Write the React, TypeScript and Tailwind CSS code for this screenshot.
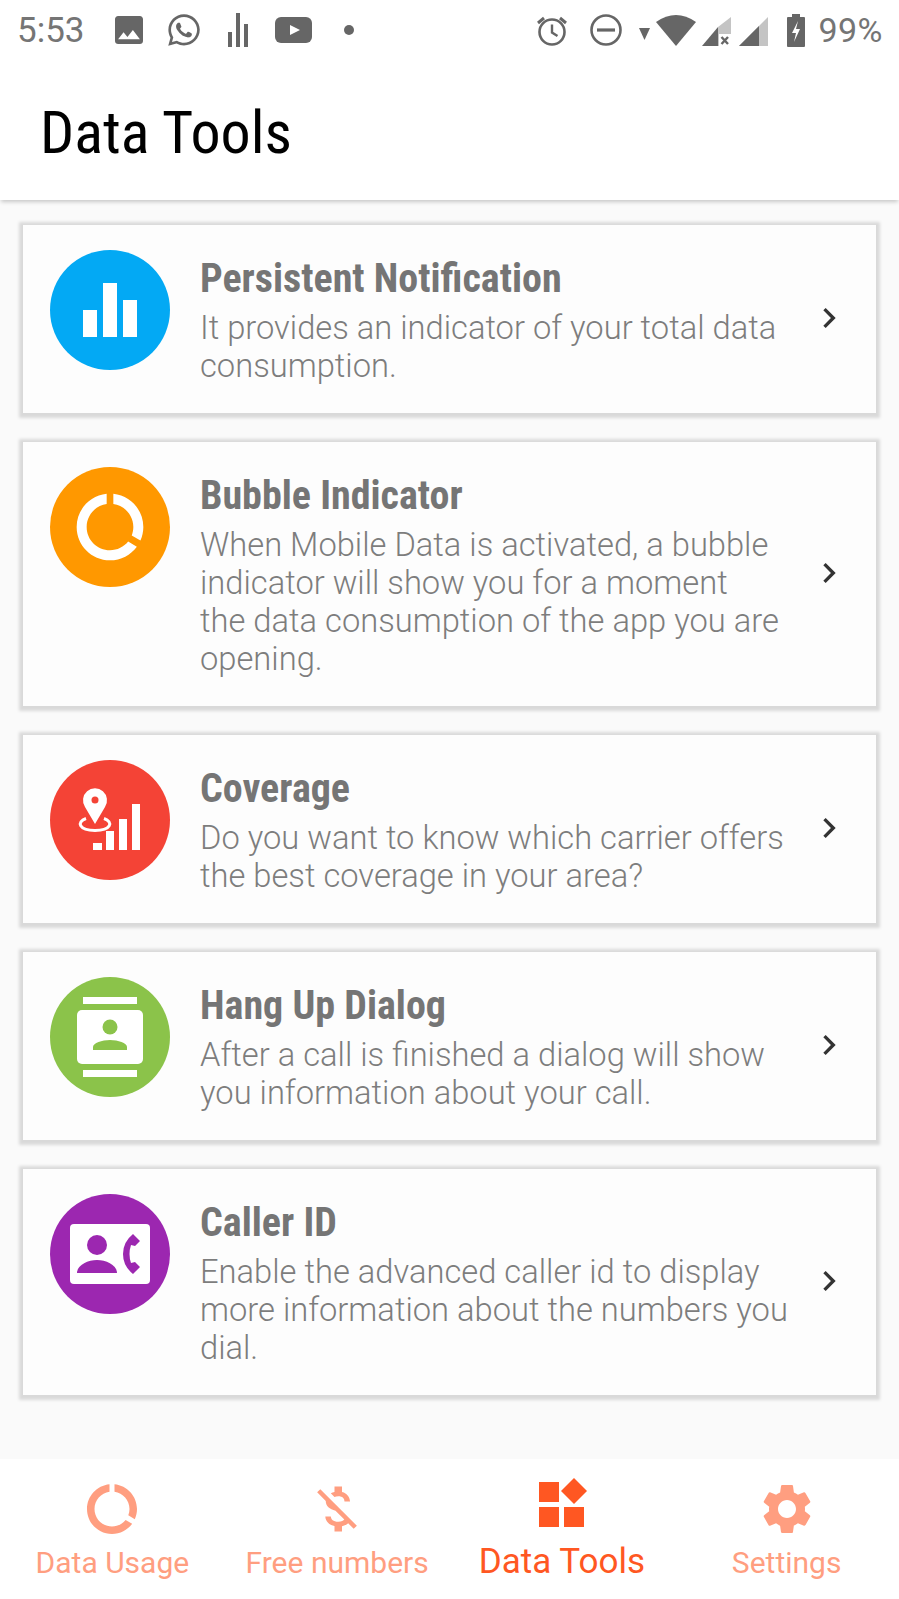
import React from 'react'
import { FaWhatsapp } from 'react-icons/fa'
import { MdChevronRight } from 'react-icons/md'

const DATA_USAGE = 'M13 2.05v3.03c3.39.49 6 3.39 6 6.92 0 .9-.18 1.75-.48 2.54l2.6 1.53c.56-1.24.88-2.62.88-4.07 0-5.18-3.95-9.45-9-9.95zM12 19c-3.87 0-7-3.13-7-7 0-3.53 2.61-6.43 6-6.92V2.05c-5.06.5-9 4.76-9 9.95 0 5.52 4.47 10 9.99 10 3.31 0 6.24-1.61 8.06-4.09l-2.6-1.53C16.17 17.98 14.21 19 12 19z'
const MONEY_OFF = 'M12.5 6.9c1.78 0 2.44.85 2.5 2.1h2.21c-.07-1.72-1.12-3.3-3.21-3.81V3h-3v2.16c-.53.12-1.03.3-1.48.54l1.47 1.47c.41-.17.91-.27 1.51-.27zM5.33 4.06L4.06 5.33 7.5 8.77c0 2.08 1.56 3.21 3.91 3.91l3.51 3.51c-.34.48-1.05.91-2.42.91-2.06 0-2.87-.92-2.98-2.1h-2.2c.12 2.19 1.76 3.42 3.68 3.83V21h3v-2.15c.96-.18 1.83-.55 2.46-1.12l2.22 2.22 1.27-1.27L5.33 4.06z'
const SETTINGS = 'M19.14 12.94c.04-.3.06-.61.06-.94 0-.32-.02-.64-.07-.94l2.03-1.58c.18-.14.23-.41.12-.61l-1.92-3.32c-.12-.22-.37-.29-.59-.22l-2.39.96c-.5-.38-1.03-.7-1.62-.94l-.36-2.54c-.04-.24-.24-.41-.48-.41h-3.84c-.24 0-.43.17-.47.41l-.36 2.54c-.59.24-1.13.57-1.62.94l-2.39-.96c-.22-.08-.47 0-.59.22L2.74 8.87c-.12.21-.08.47.12.61l2.03 1.58c-.05.3-.09.63-.09.94s.02.64.07.94l-2.03 1.58c-.18.14-.23.41-.12.61l1.92 3.32c.12.22.37.29.59.22l2.39-.96c.5.38 1.03.7 1.62.94l.36 2.54c.05.24.24.41.48.41h3.84c.24 0 .44-.17.47-.41l.36-2.54c.59-.24 1.13-.56 1.62-.94l2.39.96c.22.08.47 0 .59-.22l1.92-3.32c.12-.22.07-.47-.12-.61l-2.01-1.58zM12 15.6c-1.98 0-3.6-1.62-3.6-3.6s1.62-3.6 3.6-3.6 3.6 1.62 3.6 3.6-1.62 3.6-3.6 3.6z'

const StatusBar = () => (
  <div className="h-[60px] flex items-center justify-between bg-white text-[#666666] pl-[17px] pr-[16px]">
    <div className="flex items-center">
      <span className="text-[35px] leading-none text-[#757575] font-['Roboto',sans-serif]">5:53</span>
      <svg className="ml-[30px]" width="28" height="28" viewBox="3 3 18 18" fill="currentColor">
        <path d="M21 19V5c0-1.1-.9-2-2-2H5c-1.1 0-2 .9-2 2v14c0 1.1.9 2 2 2h14c1.1 0 2-.9 2-2zM8.5 13.5l2.5 3.01L14.5 12l4.5 6H5l3.5-4.5z" />
      </svg>
      <FaWhatsapp className="ml-[23px]" size={36} />
      <svg className="ml-[26px]" width="20" height="34" viewBox="0 0 20 34" fill="currentColor">
        <rect x="0" y="19" width="4" height="15" />
        <rect x="8" y="0" width="4" height="34" />
        <rect x="16" y="11" width="4" height="23" />
      </svg>
      <svg className="ml-[27px]" width="37" height="26" viewBox="0 0 37 26">
        <rect width="37" height="26" rx="6" fill="currentColor" />
        <path d="M15 8 L25 13 L15 18 Z" fill="#ffffff" />
      </svg>
      <div className="ml-[32px] w-[10px] h-[10px] rounded-full bg-[#666666]" />
    </div>
    <div className="flex items-center">
      <svg width="32" height="32" viewBox="0 0 32 32" fill="none" stroke="currentColor">
        <circle cx="16" cy="18" r="12.5" strokeWidth="2.6" />
        <path d="M16 10.5 V18.5 L21.5 22" strokeWidth="2.4" />
        <path d="M2 9 L8 4 M30 9 L24 4" strokeWidth="3" />
      </svg>
      <svg className="ml-[22px]" width="32" height="32" viewBox="0 0 32 32" fill="none" stroke="currentColor">
        <circle cx="16" cy="16" r="14.5" strokeWidth="2.6" />
        <path d="M7 16 H25" strokeWidth="3.2" />
      </svg>
      <svg className="ml-[17px] mt-[8px]" width="11" height="12" viewBox="0 0 11 12" fill="currentColor">
        <path d="M0 0 H11 L5.5 12 Z" />
      </svg>
      <svg className="ml-[6px]" width="40" height="32" viewBox="0 0 40 32" fill="currentColor">
        <path d="M0 8 Q20 -6 40 8 L20 32 Z" />
      </svg>
      <svg className="ml-[6px] mt-[2px]" width="29" height="29" viewBox="0 0 29 29" fill="currentColor">
        <path d="M29 0 V29 H16 V10 Z" fill="#c4c4c4" />
        <path d="M16 10 V29 H0 Z" />
        <rect x="17" y="17" width="12" height="12" fill="#ffffff" />
        <path d="M19.5 20 L26 27 M26 20 L19.5 27" stroke="#666666" strokeWidth="2.4" fill="none" />
      </svg>
      <svg className="ml-[8px] mt-[2px]" width="29" height="29" viewBox="0 0 29 29" fill="currentColor">
        <path d="M29 0 V29 H0 Z" fill="#c4c4c4" />
        <path d="M20 9 V29 H0 Z" />
      </svg>
      <svg className="ml-[19px]" width="18" height="33" viewBox="0 0 18 33">
        <path d="M5 0 H13 V3 H17 Q18 3 18 4 V32 Q18 33 17 33 H1 Q0 33 0 32 V4 Q0 3 1 3 H5 Z" fill="currentColor" />
        <path d="M11 7 L5 19 H9 L7 28 L13 15 H9 Z" fill="#ffffff" />
      </svg>
      <span className="ml-[13px] text-[34px] leading-none tracking-[0.5px] text-[#757575] font-['Roboto',sans-serif]">99%</span>
    </div>
  </div>
)

const BarsIcon = () => (
  <svg width="120" height="120" viewBox="0 0 120 120" fill="#ffffff">
    <rect x="33" y="60" width="14" height="27" />
    <rect x="53" y="33" width="14" height="54" />
    <rect x="73" y="50" width="14" height="37" />
  </svg>
)

const RingIcon = () => (
  <svg width="120" height="120" viewBox="-6 -6 36 36" fill="#ffffff">
    <path d={DATA_USAGE} />
  </svg>
)

const CoverageIcon = () => (
  <svg width="120" height="120" viewBox="0 0 120 120" fill="#ffffff">
    <path d="M45 64 L35 47 A12 12 0 1 1 55 47 Z" />
    <circle cx="45" cy="40" r="3.5" fill="#f44336" />
    <path d="M36 58.5 C26 62 29 70.5 45 70.5 C61 70.5 64 62 54 58.5" fill="none" stroke="#ffffff" strokeWidth="3" />
    <rect x="43" y="83" width="9" height="7" />
    <rect x="56" y="71" width="8" height="19" />
    <rect x="69" y="59" width="8" height="31" />
    <rect x="82" y="44" width="8" height="46" />
  </svg>
)

const DialogIcon = () => (
  <svg width="120" height="120" viewBox="0 0 120 120" fill="#ffffff">
    <rect x="33" y="20" width="54" height="7" />
    <rect x="33" y="93" width="54" height="7" />
    <rect x="27" y="33" width="66" height="54" rx="5" />
    <circle cx="60" cy="50" r="7.5" fill="#8bc34a" />
    <path d="M43 73 V70 C43 66 52 63 60 63 C68 63 77 66 77 70 V73 Z" fill="#8bc34a" />
  </svg>
)

const CallerIcon = () => (
  <svg width="120" height="120" viewBox="0 0 120 120" fill="#ffffff">
    <rect x="20" y="30" width="80" height="60" rx="4" />
    <circle cx="47" cy="51" r="10" fill="#9c27b0" />
    <path d="M27 79 C27 71 38 66 47 66 C56 66 67 71 67 79 Z" fill="#9c27b0" />
    <path d="M83 40 L90 47 L85 52 L81 51 Q78 60 81 69 L85 68 L90 73 L83 80 Q73 72 73 60 Q73 48 83 40 Z" fill="#9c27b0" />
  </svg>
)

type Tool = {
  title: string
  desc: string
  color: string
  icon: React.ReactNode
}

const tools: Tool[] = [
  {
    title: 'Persistent Notification',
    desc: 'It provides an indicator of your total data\nconsumption.',
    color: 'bg-[#03a9f4]',
    icon: <BarsIcon />,
  },
  {
    title: 'Bubble Indicator',
    desc: 'When Mobile Data is activated, a bubble\nindicator will show you for a moment\nthe data consumption of the app you are\nopening.',
    color: 'bg-[#ff9800]',
    icon: <RingIcon />,
  },
  {
    title: 'Coverage',
    desc: 'Do you want to know which carrier offers\nthe best coverage in your area?',
    color: 'bg-[#f44336]',
    icon: <CoverageIcon />,
  },
  {
    title: 'Hang Up Dialog',
    desc: 'After a call is finished a dialog will show\nyou information about your call.',
    color: 'bg-[#8bc34a]',
    icon: <DialogIcon />,
  },
  {
    title: 'Caller ID',
    desc: 'Enable the advanced caller id to display\nmore information about the numbers you\ndial.',
    color: 'bg-[#9c27b0]',
    icon: <CallerIcon />,
  },
]

const ToolCard = ({ tool }: { tool: Tool }) => (
  <div className="flex items-start bg-[#fdfdfd] pl-[27px] pt-[25px] pb-[28px] pr-[27px] shadow-[0_1px_3px_4px_rgba(0,0,0,0.13)]">
    <div className={`w-[120px] h-[120px] rounded-full shrink-0 ${tool.color}`}>{tool.icon}</div>
    <div className="ml-[30px] pt-[5px] flex-1 self-stretch">
      <div className="text-[40px] leading-[48px] font-bold text-[#757575] [font-stretch:75%] font-['Roboto',sans-serif]">{tool.title}</div>
      <div className="mt-[6px] text-[32.7px] leading-[38px] font-light text-[#7d7d7d] whitespace-pre-line font-['Roboto',sans-serif]">{tool.desc}</div>
    </div>
    <MdChevronRight className="self-center text-[#333333]" size={40} />
  </div>
)

const NavItem = ({ label, active, children }: { label: string; active?: boolean; children: React.ReactNode }) => (
  <div className={`flex flex-col items-center ${active ? 'text-[#ff5722]' : 'text-[#ff9e80]'}`}>
    <div className="h-[80px] flex items-end">{children}</div>
    <span className={`leading-[40px] font-['Roboto',sans-serif] ${active ? 'mt-[3px] text-[35px]' : 'mt-[4px] text-[30px]'}`}>{label}</span>
  </div>
)

export default function App() {
  return (
    <div className="w-[899px] h-[1599px] flex flex-col bg-[#fafafa] overflow-hidden">
      <StatusBar />
      <div className="relative h-[140px] flex items-center bg-white pl-[40px] pt-[6px] shadow-[0_3px_4px_-1px_rgba(0,0,0,0.2)]">
        <h1 className="text-[60px] leading-none text-black [font-stretch:75%] font-['Roboto',sans-serif]">Data Tools</h1>
      </div>
      <div className="flex-1 flex flex-col gap-[29px] pt-[25px] px-[23px]">
        {tools.map((tool) => (
          <ToolCard key={tool.title} tool={tool} />
        ))}
      </div>
      <div className="h-[140px] grid grid-cols-4 bg-white">
        <NavItem label="Data Usage">
          <svg width="60" height="60" viewBox="0 0 24 24" fill="currentColor"><path d={DATA_USAGE} /></svg>
        </NavItem>
        <NavItem label="Free numbers">
          <svg width="60" height="60" viewBox="0 0 24 24" fill="currentColor"><path d={MONEY_OFF} /></svg>
        </NavItem>
        <NavItem label="Data Tools" active>
          <svg className="mb-[12px]" width="50" height="50" viewBox="-2 0 50 50" fill="currentColor">
            <rect x="0" y="5" width="20" height="20" />
            <rect x="0" y="30" width="20" height="20" />
            <rect x="25" y="30" width="20" height="20" />
            <path d="M35 1 L48 14 L35 27 L22 14 Z" />
          </svg>
        </NavItem>
        <NavItem label="Settings">
          <svg width="60" height="60" viewBox="0 0 24 24" fill="currentColor"><path d={SETTINGS} /></svg>
        </NavItem>
      </div>
    </div>
  )
}
